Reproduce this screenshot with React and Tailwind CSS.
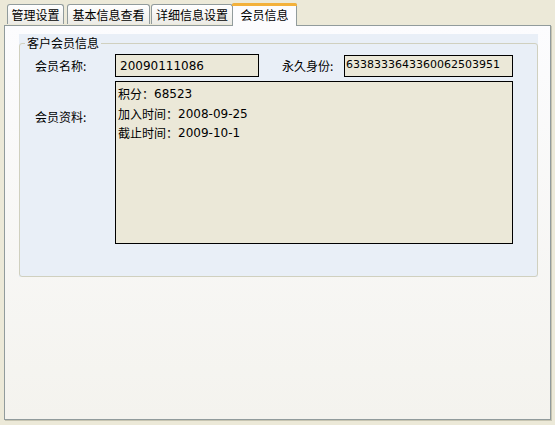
export default function App() {
  const cjk = { fontFamily: '"Noto Sans CJK SC", "DejaVu Sans", sans-serif' };
  const num = { fontFamily: '"DejaVu Sans", sans-serif' };
  const tabs = [
    ["管理设置", "w-[57px] mr-[3px]"],
    ["基本信息查看", "w-[83px] mr-[1px]"],
    ["详细信息设置", "w-[82px] -mr-[1px]"],
  ];
  return (
    <div
      className="w-[555px] h-[425px] bg-[#ECE9D8] text-[12px] text-black overflow-hidden"
      style={cjk}
    >
      {/* tab strip */}
      <div className="h-[25px] flex items-end pl-[7px] relative z-10">
        {tabs.map(([t, w]) => (
          <div
            key={t}
            className={`${w} h-[20px] mb-[1px] border border-b-0 border-[#919B9C] rounded-t-[3px] bg-gradient-to-b from-white to-[#ECEBE6] flex items-center justify-center leading-none`}
          >
            {t}
          </div>
        ))}
        <div className="h-[23px] -mb-[1px] w-[65px] border-x border-[#919B9C] rounded-t-[3px] bg-[#FCFCFE] flex flex-col">
          <div className="h-[3px] bg-[#F3B13B] rounded-t-[2px] -mx-[1px]" />
          <div className="flex-1 flex items-center justify-center leading-none pb-[2px]">会员信息</div>
        </div>
      </div>
      {/* page */}
      <div className="ml-[4px] w-[547px] h-[395px] border border-[#919B9C] shadow-[1px_1px_0_#C7C5B2] bg-gradient-to-b from-[#FCFCFE] to-[#F4F3EE] pt-[8px] pl-[14px]">
        <div className="w-[519px] h-[243px] bg-[#E9EFF7] pt-[9px] relative">
          <div className="h-full border border-[#D0D0BF] rounded-[3px]" />
          <div className="absolute left-[6px] top-[2px] px-[2px] bg-[#E9EFF7] leading-[14px]">客户会员信息</div>
          <div className="absolute inset-0 pt-[20px] pl-[16px]">
            <div className="flex items-center h-[23px]">
              <div className="w-[80px]">会员名称:</div>
              <div
                className="w-[144px] h-[23px] border border-black bg-[#EBE8D8] flex items-center pl-[4px] pt-[1px]"
                style={num}
              >
                20090111086
              </div>
              <div className="ml-[23px] w-[62px]">永久身份:</div>
              <div
                className="w-[169px] h-[22px] border border-black bg-[#EBE8D8] flex items-center pl-[1px] text-[11px]"
                style={num}
              >
                6338333643360062503951
              </div>
            </div>
            <div className="flex mt-[4px]">
              <div className="w-[80px] pt-[27px]">会员资料:</div>
              <div className="w-[398px] h-[163px] border border-black bg-[#EBE8D8] pl-[2px] pt-[2px]">
                <div className="h-[20px] flex items-center leading-none">
                  积分：<span style={num}>68523</span>
                </div>
                <div className="h-[19.5px] flex items-center leading-none">
                  加入时间：<span style={num}>2008-09-25</span>
                </div>
                <div className="h-[19.5px] flex items-center leading-none">
                  截止时间：<span style={num}>2009-10-1</span>
                </div>
              </div>
            </div>
          </div>
        </div>
      </div>
    </div>
  );
}
